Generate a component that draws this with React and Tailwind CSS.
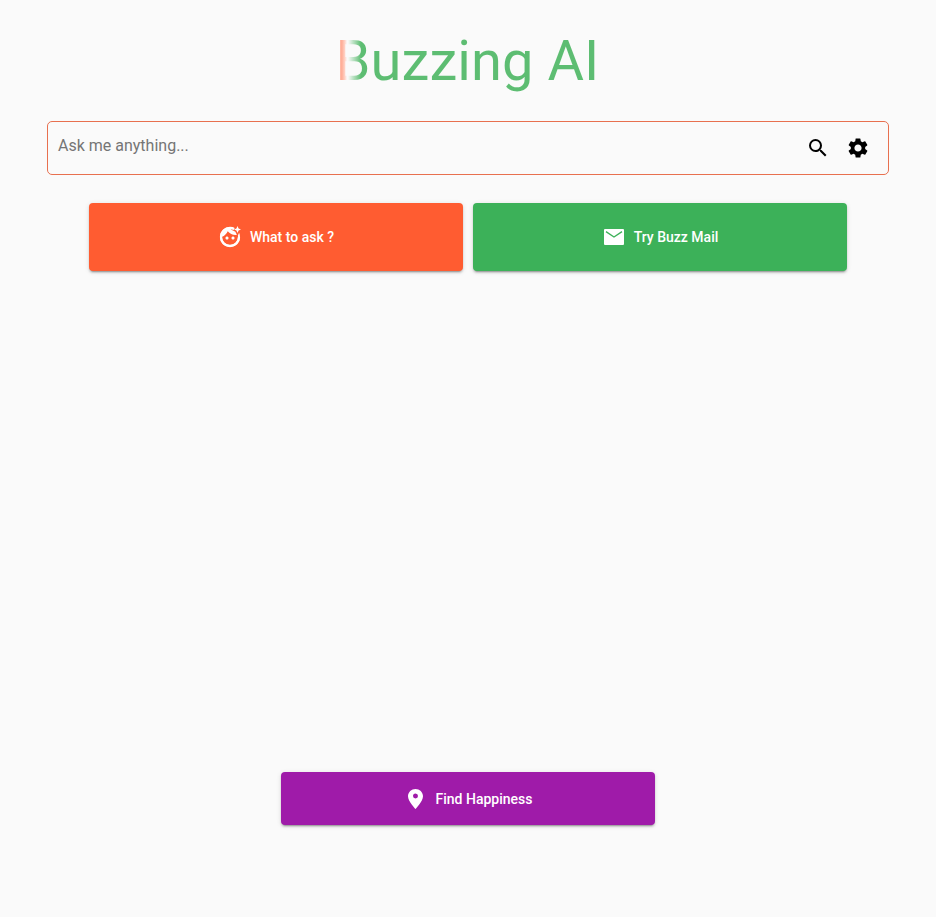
import React from "react";
import {
  MdSearch,
  MdSettings,
  MdFaceRetouchingNatural,
} from "react-icons/md";

const shadow =
  "shadow-[0_3px_1px_-2px_rgba(0,0,0,0.2),0_2px_2px_0_rgba(0,0,0,0.14),0_1px_5px_0_rgba(0,0,0,0.12)]";

function FaceIcon() {
  return (
    <svg viewBox="0 0 24 24" fill="currentColor" className="size-6">
      <MdFaceRetouchingNatural size={24} />
      <circle cx="9" cy="13" r="1.5" />
      <circle cx="15" cy="13" r="1.5" />
      <circle cx="12" cy="12" r="9" fill="none" stroke="currentColor" strokeWidth="2.3" strokeDasharray="46.5 10.1" />
    </svg>
  );
}

function MailIcon() {
  return (
    <svg viewBox="0 0 24 24" className="size-6">
      <rect x="2" y="4" width="20" height="16" rx="1" fill="currentColor" />
      <path d="M4 6.6l8 5.4 8-5.4" fill="none" stroke="#3cb159" strokeWidth="1.3" />
    </svg>
  );
}

function PinIcon() {
  return (
    <svg viewBox="0 0 24 24" fill="currentColor" className="size-6">
      <path d="M11.5 2C7.4 2 4 5.2 4 9.2c0 5.1 7.5 12.8 7.5 12.8S19 14.3 19 9.2C19 5.2 15.6 2 11.5 2zm0 9.5a2.5 2.5 0 0 1 0-5 2.5 2.5 0 0 1 0 5z" />
    </svg>
  );
}

function ActionButton({ icon: Icon, label, className }) {
  return (
    <button
      className={`flex items-center justify-center gap-2 rounded text-sm font-medium text-white ${shadow} ${className}`}
    >
      <Icon />
      <span>{label}</span>
    </button>
  );
}

export default function App() {
  return (
    <div className="flex h-[917px] w-full flex-col items-center bg-[#fafafa] font-['Roboto',sans-serif]">
      <h1 className="mt-7 mr-px bg-[linear-gradient(90deg,#ffa58c_0px,#ffb09a_6px,#ffd5c9_9px,#fafafa_11px,#fafafa_12px,#5dbd72_25px)] bg-clip-text text-[56px] leading-[66px] tracking-[0.08px] text-transparent">
        Buzzing AI
      </h1>
      <div className="mt-[27px] flex h-[54px] w-[842px] items-center rounded-[5px] border border-[#e8704f] pl-2.5 pr-[18px]">
        <span className="mb-1 flex-1 text-base text-[#757575]">
          Ask me anything...
        </span>
        <button className="mr-4">
          <MdSearch className="size-6 text-black" />
        </button>
        <button>
          <MdSettings className="size-6 text-black" />
        </button>
      </div>
      <div className="mt-7 flex gap-2.5">
        <ActionButton
          icon={FaceIcon}
          label="What to ask ?"
          className="h-[68px] w-[374px] bg-[#ff5c31]"
        />
        <ActionButton
          icon={MailIcon}
          label="Try Buzz Mail"
          className="h-[68px] w-[374px] bg-[#3cb159]"
        />
      </div>
      <ActionButton
        icon={PinIcon}
        label="Find Happiness"
        className="mt-auto mb-[92px] h-[53px] w-[374px] bg-[#9f1ba9]"
      />
    </div>
  );
}
